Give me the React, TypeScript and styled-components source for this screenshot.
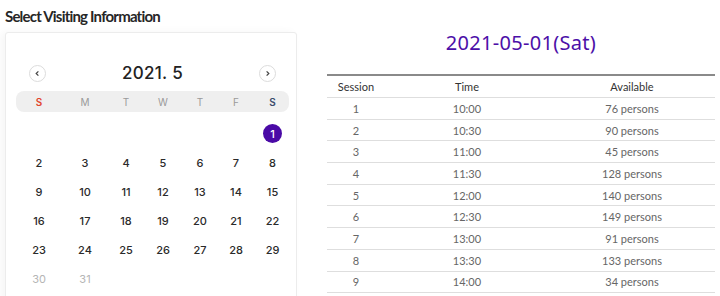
import React from 'react'
import styled, { createGlobalStyle } from 'styled-components'

const GlobalStyle = createGlobalStyle`
  html, body {
    margin: 0;
    padding: 0;
    background: #fff;
    font-family: 'Noto Sans', 'Liberation Sans', sans-serif;
    overflow: hidden;
  }
`

const Page = styled.div`
  display: flex;
  width: 720px;
  height: 296px;
  overflow: hidden;
`

const LeftCol = styled.div`
  width: 292px;
  padding-left: 5px;
  flex-shrink: 0;
`

const Title = styled.h2`
  margin: 0;
  height: 32px;
  font-family: 'Lato', 'Noto Sans', sans-serif;
  font-size: 15px;
  font-weight: 700;
  line-height: 32px;
  color: #262626;
  letter-spacing: -0.8px;
`

const Card = styled.div`
  height: 300px;
  background: #fff;
  border: 1px solid #ececec;
  border-radius: 3px;
  box-shadow: -4px 0 8px rgba(0, 0, 0, 0.04);
  padding: 24px 7px 0 10px;
  box-sizing: border-box;
`

const MonthHeader = styled.div`
  display: flex;
  align-items: center;
  justify-content: space-between;
  height: 32px;
  padding: 0 13px;
`

const NavButton = styled.button`
  width: 17px;
  height: 17px;
  border-radius: 50%;
  border: 1px solid #dcdcdc;
  background: #fff;
  padding: 0;
  display: flex;
  align-items: center;
  justify-content: center;
  color: #555;
`

const MonthLabel = styled.div`
  font-family: 'Inter', 'Noto Sans', sans-serif;
  font-size: 17px;
  font-weight: 500;
  color: #222;
  letter-spacing: 0.3px;
`

const WeekBar = styled.div`
  display: grid;
  grid-template-columns: 46px 46px 36px 38px 36px 36px 37px;
  height: 21px;
  margin-top: 2px;
  background: #efefef;
  border-radius: 8px;
  align-items: center;
`

const WeekDay = styled.span<{ $tone?: 'sun' | 'sat' }>`
  text-align: center;
  font-family: 'Inter', 'Noto Sans', sans-serif;
  font-size: 10px;
  color: ${(p) => (p.$tone === 'sun' ? '#e2442d' : p.$tone === 'sat' ? '#3b4a6b' : '#9a9a9a')};
  font-weight: ${(p) => (p.$tone ? 600 : 400)};
`

const DaysGrid = styled.div`
  display: grid;
  grid-template-columns: 46px 46px 36px 38px 36px 36px 37px;
  grid-auto-rows: 29px;
  margin-top: 7px;
  align-items: center;
`

const Day = styled.span<{ $muted?: boolean; $selected?: boolean }>`
  justify-self: center;
  width: 19px;
  height: 19px;
  border-radius: 50%;
  display: flex;
  align-items: center;
  justify-content: center;
  font-family: 'Inter', 'Noto Sans', sans-serif;
  font-size: 11px;
  color: ${(p) => (p.$selected ? '#fff' : p.$muted ? '#b5b5b5' : '#2a2a2a')};
  background: ${(p) => (p.$selected ? '#4a0aa6' : 'transparent')};
  font-weight: ${(p) => (p.$muted ? 400 : 500)};
`

const RightCol = styled.div`
  flex: 1;
  padding: 0 5px 0 30px;
`

const DateTitle = styled.div`
  margin-top: 30px;
  text-align: center;
  font-size: 20px;
  line-height: 26px;
  color: #4c0fa8;
  letter-spacing: 0.3px;
`

const Table = styled.table`
  width: 388px;
  margin-top: 18px;
  border-collapse: collapse;
  border-top: 2px solid #8a8a8a;
  font-family: 'Lato', 'Noto Sans', sans-serif;
  font-size: 11px;
  color: #666;
`

const Th = styled.th<{ $w?: number }>`
  width: ${(p) => (p.$w ? `${p.$w}px` : 'auto')};
  height: 21px;
  font-weight: 400;
  color: #333;
  text-align: center;
  border-bottom: 1px solid #dedede;
  padding: 0;
`

const Td = styled.td`
  height: 20.7px;
  text-align: center;
  border-bottom: 1px solid #dedede;
  padding: 0;
`

const Chevron = ({ dir }: { dir: 'left' | 'right' }) => (
  <svg width="7" height="7" viewBox="0 0 8 8">
    <path
      d={dir === 'left' ? 'M5 1.5 L2.5 4 L5 6.5' : 'M3 1.5 L5.5 4 L3 6.5'}
      fill="none"
      stroke="#444"
      strokeWidth="1.4"
    />
  </svg>
)

const WEEK = ['S', 'M', 'T', 'W', 'T', 'F', 'S']

const SESSIONS = [
  ['1', '10:00', 76],
  ['2', '10:30', 90],
  ['3', '11:00', 45],
  ['4', '11:30', 128],
  ['5', '12:00', 140],
  ['6', '12:30', 149],
  ['7', '13:00', 91],
  ['8', '13:30', 133],
  ['9', '14:00', 34],
] as const

const App = () => {
  const cells: (number | null)[] = [...Array(6).fill(null), ...Array.from({ length: 31 }, (_, i) => i + 1)]

  return (
    <>
      <GlobalStyle />
      <Page>
        <LeftCol>
          <Title>Select Visiting Information</Title>
          <Card>
            <MonthHeader>
              <NavButton aria-label="previous month">
                <Chevron dir="left" />
              </NavButton>
              <MonthLabel>2021. 5</MonthLabel>
              <NavButton aria-label="next month">
                <Chevron dir="right" />
              </NavButton>
            </MonthHeader>
            <WeekBar>
              {WEEK.map((d, i) => (
                <WeekDay key={i} $tone={i === 0 ? 'sun' : i === 6 ? 'sat' : undefined}>
                  {d}
                </WeekDay>
              ))}
            </WeekBar>
            <DaysGrid>
              {cells.map((d, i) =>
                d === null ? (
                  <span key={i} />
                ) : (
                  <Day key={i} $selected={d === 1} $muted={d >= 30}>
                    {d}
                  </Day>
                )
              )}
            </DaysGrid>
          </Card>
        </LeftCol>
        <RightCol>
          <DateTitle>2021-05-01(Sat)</DateTitle>
          <Table>
            <thead>
              <tr>
                <Th $w={58}>Session</Th>
                <Th $w={164}>Time</Th>
                <Th>Available</Th>
              </tr>
            </thead>
            <tbody>
              {SESSIONS.map(([n, t, a]) => (
                <tr key={n}>
                  <Td>{n}</Td>
                  <Td>{t}</Td>
                  <Td>{a} persons</Td>
                </tr>
              ))}
            </tbody>
          </Table>
        </RightCol>
      </Page>
    </>
  )
}

export default App
